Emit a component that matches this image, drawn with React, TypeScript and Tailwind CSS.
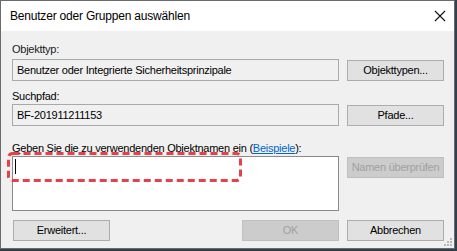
import React from "react";

const font = { fontFamily: '"Liberation Sans", Arial, sans-serif' };

function Btn({ children, disabled, className = "" }: { children: React.ReactNode; disabled?: boolean; className?: string }) {
  return (
    <div
      className={
        "flex h-[21px] items-center justify-center border text-[11px] tracking-[-0.25px] " +
        (disabled ? "border-[#bfbfbf] bg-[#cccccc] text-[#a0a0a0]" : "border-[#adadad] bg-[#e1e1e1] text-black") +
        " " +
        className
      }
    >
      {children}
    </div>
  );
}

function ReadField({ value }: { value: string }) {
  return (
    <div className="flex h-[22px] w-[327px] items-center border border-[#a9a9a9] bg-[#f0f0f0] pl-[4px] text-[11px] tracking-[-0.25px] text-black">
      {value}
    </div>
  );
}

export default function App() {
  return (
    <div className="h-[251px] w-[457px] bg-[#31404a]" style={font}>
      <div className="flex h-[249px] w-[455px] flex-col border border-[#6b6b6b] bg-[#f0f0f0]">
        {/* title bar */}
        <div className="flex h-[30px] items-center justify-between bg-white pl-[9px] pr-[6px]">
          <span className="text-[12px] tracking-[-0.2px] text-black">Benutzer oder Gruppen auswählen</span>
          <svg width="12" height="12" viewBox="0 0 12 12" className="mr-[2px]">
            <path d="M1 1 L11 11 M11 1 L1 11" stroke="#111" strokeWidth="1.1" />
          </svg>
        </div>

        <div className="relative flex flex-1 flex-col pl-[11px] pr-[10px] pt-[11px] text-[11px] tracking-[-0.25px] text-black">
          <div className="h-[14px] leading-[14px] text-[#1a1a1a]">Objekttyp:</div>
          <div className="mt-[3px] flex items-start gap-[8px]">
            <ReadField value="Benutzer oder Integrierte Sicherheitsprinzipale" />
            <Btn className="mt-[1px] w-[97px]">Objekttypen...</Btn>
          </div>

          <div className="mt-[8px] h-[14px] leading-[14px]">Suchpfad:</div>
          <div className="mt-[1px] flex items-start gap-[8px]">
            <ReadField value="BF-201911211153" />
            <Btn className="mt-[1px] w-[97px]">Pfade...</Btn>
          </div>

          <div className="mt-[15px] h-[14px] leading-[14px]">
            <span className="underline">G</span>eben Sie die zu verwendenden Objektnamen ein (
            <span className="text-[#0066cc] underline">Beispiele</span>):
          </div>
          <div className="mt-[1px] flex items-start gap-[8px]">
            <div className="relative h-[55px] w-[327px] border border-[#8a8a8a] bg-white">
              <div className="ml-[2px] mt-[2px] h-[15px] w-px bg-black" />
              <svg className="absolute left-[-6px] top-[-5px]" width="235" height="30" viewBox="0 0 235 30">
                <rect x="1.5" y="1.5" width="232" height="27" rx="4" fill="none" stroke="#e5414a" strokeWidth="3" strokeDasharray="7 4" />
              </svg>
            </div>
            <Btn disabled className="mt-[1px] w-[97px]">Namen überprüfen</Btn>
          </div>

          <div className="mt-[9px] flex items-center">
            <Btn className="ml-[1px] w-[97px]">Erweitert...</Btn>
            <div className="flex-1" />
            <Btn disabled className="w-[97px] text-[#838383]">OK</Btn>
            <Btn className="ml-[8px] w-[97px]">Abbrechen</Btn>
          </div>

          <svg className="absolute bottom-[1px] right-[1px]" width="10" height="10" viewBox="0 0 10 10">
            <rect x="7" y="1" width="2" height="2" fill="#b8b8b8" />
            <rect x="4" y="4" width="2" height="2" fill="#b8b8b8" />
            <rect x="7" y="4" width="2" height="2" fill="#b8b8b8" />
            <rect x="1" y="7" width="2" height="2" fill="#b8b8b8" />
            <rect x="4" y="7" width="2" height="2" fill="#b8b8b8" />
            <rect x="7" y="7" width="2" height="2" fill="#b8b8b8" />
          </svg>
        </div>
      </div>
    </div>
  );
}
